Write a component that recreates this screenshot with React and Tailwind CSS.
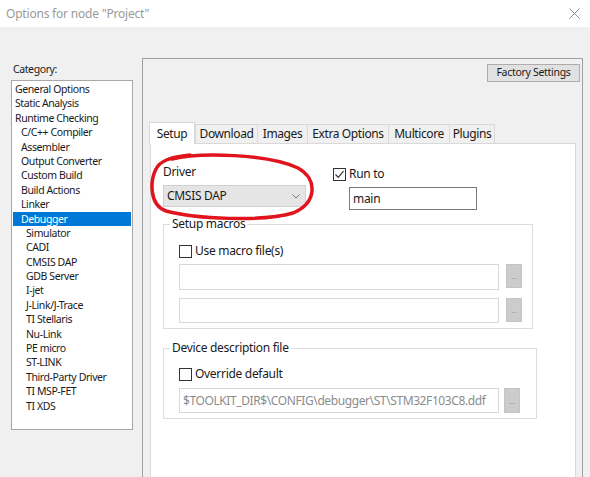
import React from 'react'

const categories = [
  { label: 'General Options', level: 0 },
  { label: 'Static Analysis', level: 0 },
  { label: 'Runtime Checking', level: 0 },
  { label: 'C/C++ Compiler', level: 1 },
  { label: 'Assembler', level: 1 },
  { label: 'Output Converter', level: 1 },
  { label: 'Custom Build', level: 1 },
  { label: 'Build Actions', level: 1 },
  { label: 'Linker', level: 1 },
  { label: 'Debugger', level: 1, selected: true },
  { label: 'Simulator', level: 2 },
  { label: 'CADI', level: 2 },
  { label: 'CMSIS DAP', level: 2 },
  { label: 'GDB Server', level: 2 },
  { label: 'I-jet', level: 2 },
  { label: 'J-Link/J-Trace', level: 2 },
  { label: 'TI Stellaris', level: 2 },
  { label: 'Nu-Link', level: 2 },
  { label: 'PE micro', level: 2 },
  { label: 'ST-LINK', level: 2 },
  { label: 'Third-Party Driver', level: 2 },
  { label: 'TI MSP-FET', level: 2 },
  { label: 'TI XDS', level: 2 },
]

const tabs = [
  { label: 'Setup', w: 'w-[46px]' },
  { label: 'Download', w: 'w-[62px]' },
  { label: 'Images', w: 'w-[50px]' },
  { label: 'Extra Options', w: 'w-[81px]' },
  { label: 'Multicore', w: 'w-[61px]' },
  { label: 'Plugins', w: 'w-[46px]' },
]

const indent = ['pl-[2px]', 'pl-[8px]', 'pl-[13px]']

const CheckBox = ({ checked }) => (
  <div className="w-[13px] h-[13px] border border-[#333] bg-white flex items-center justify-center">
    {checked && (
      <svg width="11" height="11" viewBox="0 0 11 11">
        <path d="M1.5 5.5 L4.3 8.3 L9.5 2.2" fill="none" stroke="#333" strokeWidth="1.2" />
      </svg>
    )}
  </div>
)

const BrowseBtn = ({ h }) => (
  <div className={`w-[16px] ${h} bg-[#cccccc] border border-[#c4c4c4] flex items-end justify-center pb-[7px]`}>
    <span className="text-[7px] leading-none text-[#999]">...</span>
  </div>
)

const App = () => {
  return (
    <div className="relative w-[590px] h-[477px] overflow-hidden bg-[#f0f0f0] text-[#1a1a1a] font-['Noto_Sans',sans-serif]">
      {/* Title bar */}
      <div className="h-[27px] bg-white flex items-center justify-between pl-[6px] pr-[10px]">
        <span className="text-[12px] tracking-[-0.2px] text-[#9a9a9a]">Options for node "Project"</span>
        <svg width="11" height="11" viewBox="0 0 11 11">
          <path d="M0.5 0.5 L10.5 10.5 M10.5 0.5 L0.5 10.5" stroke="#8a8a8a" strokeWidth="1" />
        </svg>
      </div>

      <div className="flex">
        {/* Category column */}
        <div className="w-[142px] pl-[11px] pt-[35px]">
          <div className="text-[10.5px] leading-[14px] tracking-[-0.4px] pl-[2px] mb-[4px]">Category:</div>
          <div className="w-[122px] h-[350px] bg-white border border-[#a8a8a8] pt-[1px] px-[1px]">
            {categories.map((c) => (
              <div
                key={c.label}
                className={`h-[14.4px] leading-[14.4px] text-[10.5px] tracking-[-0.4px] whitespace-nowrap ${indent[c.level]} ${
                  c.selected ? 'bg-[#0078d7] text-white' : ''
                }`}
              >
                {c.label}
              </div>
            ))}
          </div>
        </div>

        {/* Options panel */}
        <div className="mt-[31px] w-[441px] h-[430px] border border-[#a0a0a0] pl-[7px] pr-[6px] pt-[5px] flex flex-col">
          <div className="flex justify-end -mr-[4px]">
            <div className="w-[93px] h-[18px] bg-[#e1e1e1] border border-[#adadad] flex items-center justify-center text-[10.5px] tracking-[-0.3px]">
              Factory Settings
            </div>
          </div>

          {/* Tabs */}
          <div className="mt-[40px] flex items-end -ml-[1px] h-[21px]">
            {tabs.map((t, i) => (
              <div
                key={t.label}
                className={`${t.w} flex items-center justify-center text-[12px] tracking-[-0.4px] border-t border-l border-[#d9d9d9] ${
                  i === tabs.length - 1 ? 'border-r' : ''
                } ${i === 0 ? 'h-[22px] bg-white relative z-10 -mb-[1px] border-r' : 'h-[19px] bg-[#f0f0f0]'}`}
              >
                {t.label}
              </div>
            ))}
          </div>

          {/* Tab page */}
          <div className="flex-1 bg-white border border-[#d9d9d9] pl-[12px] pt-[20px]">
            <div className="flex">
              <div className="w-[143px]">
                <div className="text-[12px] leading-[16px] tracking-[-0.3px]">Driver</div>
                <div className="mt-[5px] h-[22px] bg-[#e5e5e5] border border-[#d0d0d0] flex items-center justify-between pl-[3px] pr-[5px]">
                  <span className="text-[12px] tracking-[-0.3px]">CMSIS DAP</span>
                  <svg width="8" height="5" viewBox="0 0 8 5">
                    <path d="M0.5 0.5 L4 4 L7.5 0.5" fill="none" stroke="#777" strokeWidth="1" />
                  </svg>
                </div>
              </div>
              <div className="ml-[27px] pt-[2px]">
                <div className="flex items-center gap-[3px] h-[16px]">
                  <CheckBox checked />
                  <span className="text-[12px] tracking-[-0.3px]">Run to</span>
                </div>
                <div className="ml-[16px] mt-[5px] w-[128px] h-[23px] border border-[#7a7a7a] flex items-center pl-[3px] text-[12px] tracking-[-0.3px]">
                  main
                </div>
              </div>
            </div>

            <fieldset className="mt-[7px] w-[370px] border border-[#dcdcdc] pl-[15px] pr-[10px] pb-[5px]">
              <legend className="-ml-[9px] px-[2px] text-[12px] leading-[14px] tracking-[-0.3px]">Setup macros</legend>
              <div className="pt-[12px] flex items-center gap-[3px] h-[28px]">
                <CheckBox />
                <span className="text-[12px] tracking-[-0.3px]">Use macro file(s)</span>
              </div>
              <div className="mt-[5px] flex gap-[7px]">
                <div className="w-[320px] h-[26px] border border-[#d8d8d8]" />
                <BrowseBtn h="h-[24px]" />
              </div>
              <div className="mt-[8px] flex gap-[7px]">
                <div className="w-[320px] h-[25px] border border-[#d8d8d8]" />
                <BrowseBtn h="h-[24px]" />
              </div>
            </fieldset>

            <fieldset className="mt-[12px] w-[374px] border border-[#dcdcdc] pl-[15px] pr-[10px] pb-[5px]">
              <legend className="-ml-[9px] px-[2px] text-[12px] leading-[14px] tracking-[-0.3px]">Device description file</legend>
              <div className="pt-[11px] flex items-center gap-[3px] h-[27px]">
                <CheckBox />
                <span className="text-[12px] tracking-[-0.3px]">Override default</span>
              </div>
              <div className="mt-[6px] flex gap-[5px]">
                <div className="w-[320px] h-[25px] border border-[#d8d8d8] flex items-center pl-[3px] text-[12px] tracking-[-0.4px] text-[#8c8c8c] whitespace-nowrap overflow-hidden">
                  $TOOLKIT_DIR$\CONFIG\debugger\ST\STM32F103C8.ddf
                </div>
                <BrowseBtn h="h-[25px]" />
              </div>
            </fieldset>
          </div>
        </div>
      </div>

      {/* hand-drawn red annotation */}
      <svg className="absolute inset-0 pointer-events-none" width="590" height="477" viewBox="0 0 590 477">
        <path
          d="M172 159 C200 152, 268 154, 298 168 C318 179, 317 203, 293 213 C262 222, 196 219, 166 211 C149 205, 150 181, 156 169 C160 161, 170 157, 190 155"
          fill="none"
          stroke="#e0141c"
          strokeWidth="3.5"
          strokeLinecap="round"
        />
      </svg>
    </div>
  )
}

export default App
